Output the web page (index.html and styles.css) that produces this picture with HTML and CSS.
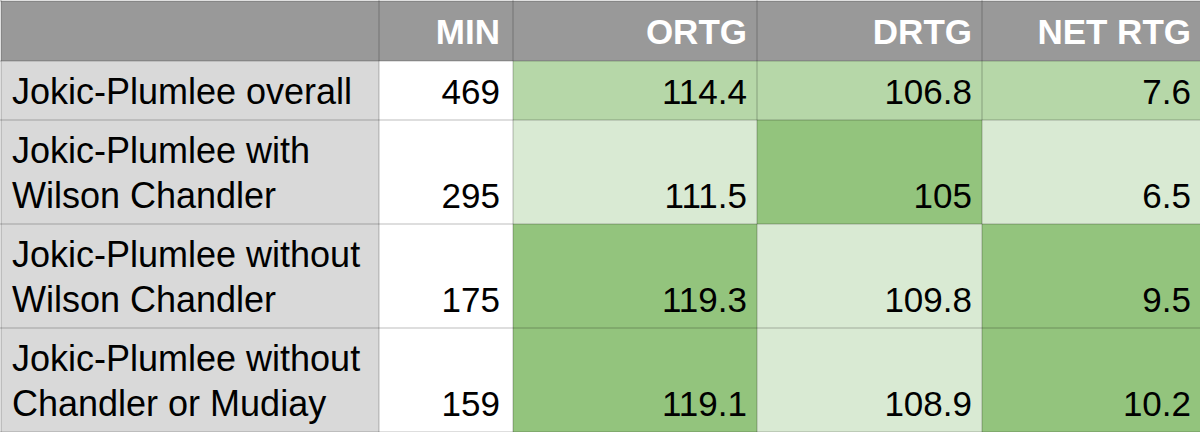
FILE: index.html
```html
<!DOCTYPE html>
<html lang="en">
<head>
<meta charset="utf-8">
<title>Jokic-Plumlee</title>
<link rel="stylesheet" href="styles.css">
</head>
<body>
<table class="stats">
  <colgroup>
    <col class="c-label"><col class="c-min"><col class="c-ortg"><col class="c-drtg"><col class="c-net">
  </colgroup>
  <thead>
    <tr class="head">
      <th></th><th class="min">MIN</th><th>ORTG</th><th>DRTG</th><th>NET RTG</th>
    </tr>
  </thead>
  <tbody>
    <tr class="r-short">
      <td class="label">Jokic-Plumlee overall</td>
      <td class="num min white">469</td>
      <td class="num g2">114.4</td>
      <td class="num g2">106.8</td>
      <td class="num g2">7.6</td>
    </tr>
    <tr class="r-tall">
      <td class="label">Jokic-Plumlee with<br>Wilson Chandler</td>
      <td class="num min white">295</td>
      <td class="num g1">111.5</td>
      <td class="num g3">105</td>
      <td class="num g1">6.5</td>
    </tr>
    <tr class="r-tall">
      <td class="label">Jokic-Plumlee without<br>Wilson Chandler</td>
      <td class="num min white">175</td>
      <td class="num g3">119.3</td>
      <td class="num g1">109.8</td>
      <td class="num g3">9.5</td>
    </tr>
    <tr class="r-tall">
      <td class="label">Jokic-Plumlee without<br>Chandler or Mudiay</td>
      <td class="num min white">159</td>
      <td class="num g3">119.1</td>
      <td class="num g1">108.9</td>
      <td class="num g3">10.2</td>
    </tr>
  </tbody>
</table>
</body>
</html>
```
FILE: styles.css
```css
html, body {
  margin: 0;
  padding: 0;
  background: #ffffff;
}
.stats {
  width: 1200px;
  table-layout: fixed;
  border-collapse: collapse;
  font-family: "Liberation Sans", Arial, sans-serif;
  color: #000;
}
.c-label { width: 378px; }
.c-min { width: 134px; }
.c-ortg { width: 244px; }
.c-drtg { width: 225px; }
.c-net { width: 219px; }

.stats th, .stats td {
  border: 2px solid rgba(0, 0, 0, 0.13);
  vertical-align: bottom;
  padding: 0 9px 5px 10px;
  line-height: 45px;
}
.stats .min { padding-right: 12px; }
.stats th {
  background: #999999;
  color: #ffffff;
  font-weight: bold;
  font-size: 35px;
  text-align: right;
  border-color: rgba(0, 0, 0, 0.12);
  padding-bottom: 6px;
}
.head { height: 60px; }
.r-short { height: 59px; }
.r-tall { height: 104px; }

.stats td {
  font-size: 35px;
}
.stats .label {
  background: #d9d9d9;
  text-align: left;
  white-space: nowrap;
  font-size: 36px;
}
.num { text-align: right; }
.white { background: #ffffff; }
.g1 { background: #d9ead3; }
.g2 { background: #b6d7a8; }
.g3 { background: #93c47d; }
```
